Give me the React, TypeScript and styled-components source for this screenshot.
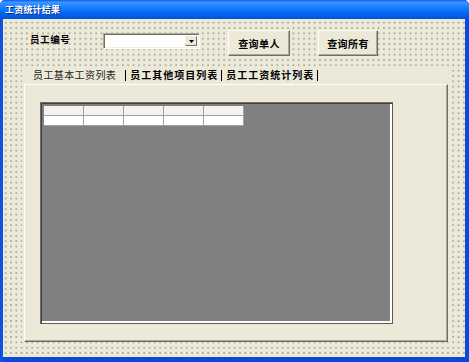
import React from "react";
import styled, { createGlobalStyle } from "styled-components";

const Global = createGlobalStyle`
  html, body { margin: 0; padding: 0; background: #ffffff; }
  body { font-family: "Noto Sans CJK SC", "DejaVu Sans", sans-serif; }
`;

const Window = styled.div`
  width: 469px;
  height: 362px;
  display: flex;
  flex-direction: column;
  background: #0842d6;
  border-radius: 5px 5px 0 0;
  overflow: hidden;
`;

const TitleBar = styled.div`
  height: 19px;
  flex: none;
  display: flex;
  align-items: center;
  padding-left: 5px;
  background: linear-gradient(
    180deg,
    #0a5ee8 0%,
    #3d95ff 12%,
    #2a8aff 25%,
    #147bfc 45%,
    #0468f2 65%,
    #035ce8 85%,
    #0152dc 100%
  );
`;

const Title = styled.span`
  color: #ffffff;
  font-size: 9px;
  font-weight: 700;
  letter-spacing: 0.2px;
  text-shadow: 1px 1px 0 #0a2a8a;
  line-height: 1;
`;

const Frame = styled.div`
  flex: 1;
  display: flex;
  padding: 0 4px 5px 3px;
  background: linear-gradient(90deg, #0636c6 0, #1a5fe8 1px, #0a48de 3px);
`;

const Body = styled.div`
  flex: 1;
  display: flex;
  flex-direction: column;
  background-color: #ece9d8;
  background-image: radial-gradient(circle, #a9a697 0.6px, transparent 0.9px);
  background-size: 5.333px 5.333px;
  background-position: 0 1px;
`;

const TopRow = styled.div`
  display: flex;
  align-items: center;
  height: 26px;
  margin-top: 11px;
  padding-left: 27px;
`;

const Label = styled.span`
  font-size: 9.5px;
  font-weight: 700;
  letter-spacing: 0.6px;
  color: #000;
  width: 73px;
  line-height: 1;
  margin-top: -6px;
`;

const Combo = styled.div`
  width: 97px;
  height: 16px;
  box-sizing: border-box;
  background: #ffffff;
  border-top: 1px solid #aca899;
  border-left: 1px solid #aca899;
  border-right: 1px solid #ffffff;
  border-bottom: 1px solid #ffffff;
  box-shadow: inset 1px 1px 0 #716f64, inset -1px -1px 0 #f1efe2;
  display: flex;
  justify-content: flex-end;
  align-items: stretch;
  padding: 2px;
  margin-top: -4px;
`;

const ComboArrow = styled.div`
  width: 10px;
  background: #ece9d8;
  border-top: 1px solid #f1efe2;
  border-left: 1px solid #f1efe2;
  border-right: 1px solid #716f64;
  border-bottom: 1px solid #716f64;
  display: flex;
  align-items: center;
  justify-content: center;
`;

const Button = styled.div<{ $w: number; $gap: number }>`
  width: ${(p) => p.$w}px;
  height: 26px;
  box-sizing: border-box;
  margin-left: ${(p) => p.$gap}px;
  background: #ece9d8;
  border-top: 1px solid #ffffff;
  border-left: 1px solid #ffffff;
  border-right: 1px solid #716f64;
  border-bottom: 1px solid #716f64;
  box-shadow: inset -1px -1px 0 #aca899;
  display: flex;
  align-items: center;
  justify-content: center;
  font-size: 10px;
  font-weight: 700;
  letter-spacing: 0.4px;
  color: #000;
`;

const TabControl = styled.div`
  margin: 10px 0 0 19px;
  width: 427px;
  height: 276px;
  background: #ece9d8;
  display: flex;
  flex-direction: column;
`;

const TabRow = styled.div`
  height: 18px;
  display: flex;
  align-items: center;
  padding-left: 11px;
  font-size: 10px;
  line-height: 1;
  color: #000;
`;

const TabLabel = styled.span<{ $active?: boolean }>`
  font-weight: ${(p) => (p.$active ? 400 : 700)};
  letter-spacing: ${(p) => (p.$active ? "0.4px" : "1px")};
  color: ${(p) => (p.$active ? "#222" : "#000")};
`;

const Sep = styled.span<{ $l: number; $r: number }>`
  display: inline-block;
  width: 1px;
  height: 11px;
  background: #000;
  margin: 0 ${(p) => p.$r}px 0 ${(p) => p.$l}px;
`;

const Panel = styled.div`
  margin-left: 2px;
  width: 424px;
  height: 258px;
  box-sizing: border-box;
  border-top: 1px solid #ffffff;
  border-left: 1px solid #ffffff;
  border-right: 1px solid #716f64;
  border-bottom: 1px solid #716f64;
  box-shadow: inset -1px -1px 0 #aca899;
  padding: 17px 0 0 15px;
`;

const Grid = styled.div`
  width: 353px;
  height: 222px;
  box-sizing: border-box;
  background: #808080;
  border-top: 1px solid #716f64;
  border-left: 1px solid #716f64;
  border-right: 1px solid #5d5b50;
  border-bottom: 1px solid #5d5b50;
  box-shadow: inset 1px 1px 0 #404040, inset -2px -2px 0 #ffffff;
  padding: 3px 0 0 3px;
`;

const Table = styled.div`
  display: grid;
  grid-template-columns: repeat(5, 39px);
  grid-auto-rows: 9px;
  gap: 1px;
  width: max-content;
  background: #a0a0a0;
  border-bottom: 1px solid #a0a0a0;
  border-right: 1px solid #a0a0a0;
`;

const Cell = styled.div<{ $fixed?: boolean }>`
  background: ${(p) => (p.$fixed ? "#f4f3ee" : "#ffffff")};
`;

export default function App() {
  const cols = [0, 1, 2, 3, 4];
  return (
    <>
      <Global />
      <Window>
        <TitleBar>
          <Title>工资统计结果</Title>
        </TitleBar>
        <Frame>
          <Body>
            <TopRow>
              <Label>员工编号</Label>
              <Combo>
                <ComboArrow>
                  <svg width="5" height="3" viewBox="0 0 5 3">
                    <path d="M0 0H5L2.5 3Z" fill="#000" />
                  </svg>
                </ComboArrow>
              </Combo>
              <Button $w={62} $gap={28}>查询单人</Button>
              <Button $w={60} $gap={28}>查询所有</Button>
            </TopRow>
            <TabControl>
              <TabRow>
                <TabLabel $active>员工基本工资列表</TabLabel>
                <Sep $l={9} $r={4} />
                <TabLabel>员工其他项目列表</TabLabel>
                <Sep $l={3} $r={4} />
                <TabLabel>员工工资统计列表</TabLabel>
                <Sep $l={3} $r={0} />
              </TabRow>
              <Panel>
                <Grid>
                  <Table>
                    {cols.map((c) => (
                      <Cell key={"f" + c} $fixed />
                    ))}
                    {cols.map((c) => (
                      <Cell key={"r" + c} />
                    ))}
                  </Table>
                </Grid>
              </Panel>
            </TabControl>
          </Body>
        </Frame>
      </Window>
    </>
  );
}
